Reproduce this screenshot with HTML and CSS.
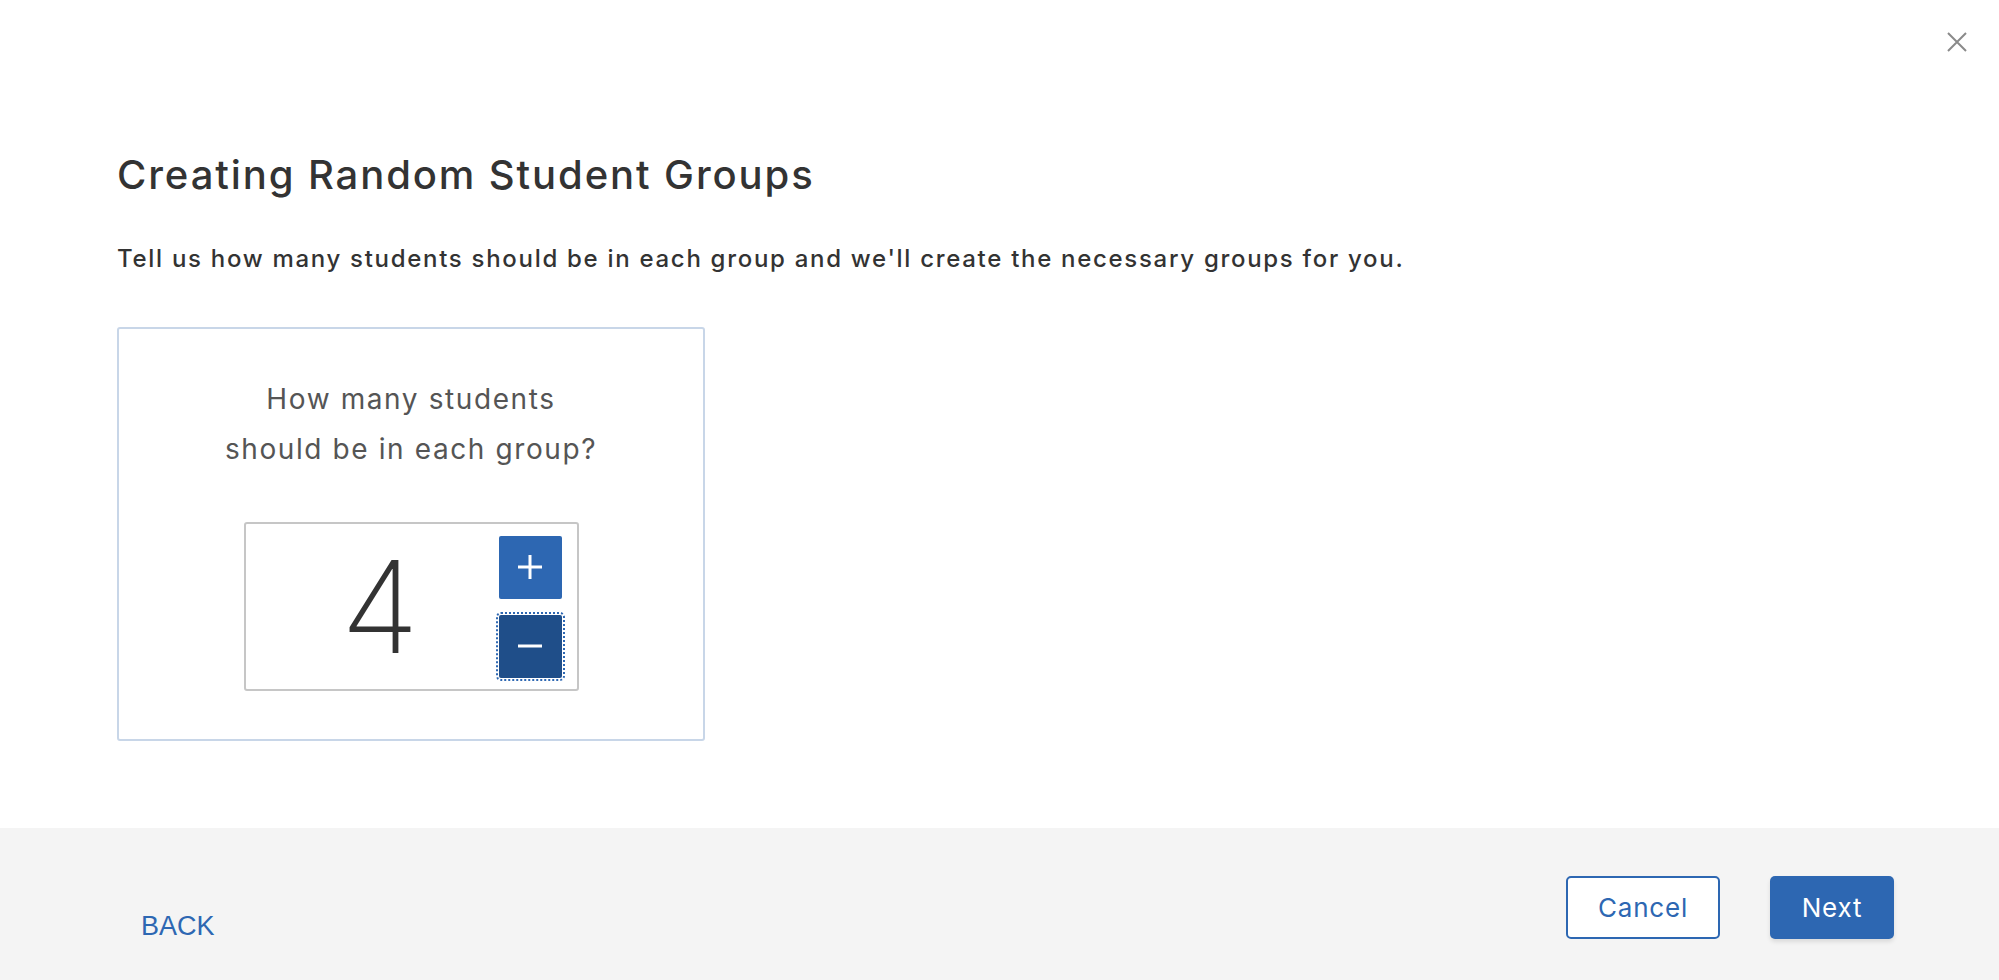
FILE: index.html
```html
<!DOCTYPE html>
<html lang="en">
<head>
    <meta charset="UTF-8">
    <meta name="viewport" content="width=device-width, initial-scale=1.0">
    <title>Creating Random Student Groups</title>
    <link rel="stylesheet" href="styles.css">
</head>
<body>
    <div class="modal">
        <div class="topbar">
            <button class="close" aria-label="Close">
                <svg width="22" height="22" viewBox="0 0 22 22">
                    <path d="M2 2 L20 20 M20 2 L2 20" stroke="#8a8a8a" stroke-width="2" fill="none"/>
                </svg>
            </button>
        </div>
        <main class="content">
            <h1>Creating Random Student Groups</h1>
            <p class="lead">Tell us how many students should be in each group and we'll create the necessary groups for you.</p>
            <section class="card">
                <p class="question">How many students<br>should be in each group?</p>
                <div class="stepper">
                    <span class="value">4</span>
                    <div class="step-buttons">
                        <button class="step plus" aria-label="Increase">
                            <svg width="26" height="26" viewBox="0 0 26 26">
                                <path d="M13 1 V25 M1 13 H25" stroke="#fff" stroke-width="3" fill="none"/>
                            </svg>
                        </button>
                        <button class="step minus focused" aria-label="Decrease">
                            <svg width="26" height="26" viewBox="0 0 26 26">
                                <path d="M1 13 H25" stroke="#fff" stroke-width="3" fill="none"/>
                            </svg>
                        </button>
                    </div>
                </div>
            </section>
        </main>
        <footer class="footer">
            <a class="back" href="#">BACK</a>
            <div class="actions">
                <button class="btn btn-outline">Cancel</button>
                <button class="btn btn-primary">Next</button>
            </div>
        </footer>
    </div>
</body>
</html>
```

FILE: styles.css
```css
body {
    margin: 0;
    padding: 0;
    font-family: Inter, "Noto Sans", sans-serif;
    color: #333;
    background: #fff;
}
.modal {
    display: flex;
    flex-direction: column;
    min-height: 100vh;
}
.topbar {
    display: flex;
    justify-content: flex-end;
    padding: 31px 31px 0 0;
}
.close {
    border: 0;
    background: none;
    padding: 0;
    width: 22px;
    height: 22px;
    cursor: pointer;
}
.content {
    flex: 1;
    padding: 0 0 0 117px;
}
h1 {
    font-size: 40px;
    font-weight: 500;
    letter-spacing: 1.9px;
    margin: 100px 0 0;
    line-height: 44px;
}
.lead {
    font-size: 24px;
    font-weight: 500;
    letter-spacing: 1.7px;
    margin: 47px 0 0;
    line-height: 30px;
}
.card {
    width: 584px;
    height: 410px;
    margin-top: 53px;
    border: 2px solid #c8d6e8;
    border-radius: 3px;
    display: flex;
    flex-direction: column;
    align-items: center;
}
.question {
    margin: 45px 0 0;
    font-size: 28px;
    letter-spacing: 1.6px;
    line-height: 50px;
    text-align: center;
    color: #555;
}
.stepper {
    margin-top: 48px;
    width: 316px;
    height: 165px;
    border: 2px solid #c6c6c6;
    border-radius: 3px;
    display: flex;
    align-items: center;
    padding-right: 15px;
}
.value {
    flex: 1;
    text-align: center;
    padding-left: 16px;
    font-size: 128px;
    font-weight: 200;
    line-height: 1;
    color: #333;
}
.step-buttons {
    display: flex;
    flex-direction: column;
    gap: 16px;
}
.step {
    width: 63px;
    height: 63px;
    border: 0;
    border-radius: 2px;
    padding: 0;
    display: flex;
    align-items: center;
    justify-content: center;
    cursor: pointer;
}
.plus {
    background: #2d67b2;
}
.minus {
    background: #1f4e89;
}
.focused {
    outline: 2px dotted #2d67b2;
    outline-offset: 1px;
}
.footer {
    height: 152px;
    background: #f4f4f4;
    display: flex;
    justify-content: space-between;
    padding: 0 105px 0 141px;
}
.back {
    align-self: center;
    margin-top: 44px;
    font-family: "Liberation Sans", Arial, sans-serif;
    font-size: 27px;
    color: #2d67b2;
    text-decoration: none;
}
.actions {
    display: flex;
    gap: 50px;
    padding-top: 48px;
    align-items: flex-start;
}
.btn {
    height: 63px;
    border-radius: 5px;
    font-family: Inter, "Noto Sans", sans-serif;
    font-size: 26px;
    letter-spacing: 0.8px;
    cursor: pointer;
}
.btn-outline {
    width: 154px;
    background: #fff;
    border: 2px solid #2d67b2;
    color: #2d67b2;
}
.btn-primary {
    width: 124px;
    background: #2d67b2;
    border: 0;
    color: #fff;
    box-shadow: 0 3px 4px rgba(0, 0, 0, 0.1);
}
```
